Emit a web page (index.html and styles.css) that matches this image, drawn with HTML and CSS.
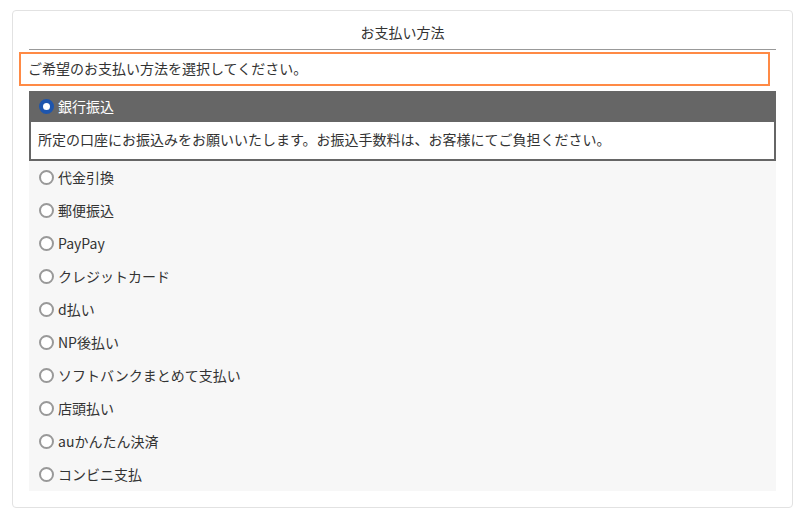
FILE: index.html
```html
<!DOCTYPE html>
<html lang="ja">
<head>
<meta charset="utf-8">
<title>お支払い方法</title>
<link rel="stylesheet" href="styles.css">
</head>
<body>
<section class="card">
  <h2 class="title">お支払い方法</h2>
  <p class="notice">ご希望のお支払い方法を選択してください。</p>
  <ul class="methods">
    <li class="method selected">
      <div class="method-head"><span class="radio"></span>銀行振込</div>
      <div class="method-desc">所定の口座にお振込みをお願いいたします。お振込手数料は、お客様にてご負担ください。</div>
    </li>
    <li class="method"><div class="method-head"><span class="radio"></span>代金引換</div></li>
    <li class="method"><div class="method-head"><span class="radio"></span>郵便振込</div></li>
    <li class="method"><div class="method-head"><span class="radio"></span>PayPay</div></li>
    <li class="method"><div class="method-head"><span class="radio"></span>クレジットカード</div></li>
    <li class="method"><div class="method-head"><span class="radio"></span>d払い</div></li>
    <li class="method"><div class="method-head"><span class="radio"></span>NP後払い</div></li>
    <li class="method"><div class="method-head"><span class="radio"></span>ソフトバンクまとめて支払い</div></li>
    <li class="method"><div class="method-head"><span class="radio"></span>店頭払い</div></li>
    <li class="method"><div class="method-head"><span class="radio"></span>auかんたん決済</div></li>
    <li class="method"><div class="method-head"><span class="radio"></span>コンビニ支払</div></li>
  </ul>
</section>
</body>
</html>
```
FILE: styles.css
```css
* { box-sizing: border-box; }
html, body { margin: 0; padding: 0; background: #fff; }
body {
  font-family: "Noto Sans CJK JP", "Noto Sans", sans-serif;
  font-size: 14px;
  color: #333;
}
.card {
  margin: 10px 8px 0 12px;
  width: 781px;
  height: 498px;
  border: 1px solid #e2e2e2;
  border-radius: 4px;
  padding: 0 16px 16px;
}
.title {
  margin: 0;
  padding: 11px 0 7px;
  font-size: 14px;
  font-weight: normal;
  line-height: 20px;
  text-align: center;
  border-bottom: 1px solid #999;
}
.notice {
  margin: 2px 6px 0 -10px;
  border: 2px solid #ff8a45;
  padding: 4px 7px 6px;
  line-height: 20px;
}
.methods {
  list-style: none;
  margin: 5px 0 0;
  padding: 0;
  background: #f7f7f7;
}
.method-head {
  display: flex;
  align-items: center;
  gap: 4px;
  height: 33px;
  padding: 0 0 2px 10px;
}
.selected .method-head {
  height: 31px;
  background: #666;
  color: #fff;
}
.radio {
  width: 15px;
  height: 15px;
  margin-top: 2px;
  border-radius: 50%;
  border: 2px solid #999;
  background: #fff;
  flex: none;
}
.selected .radio {
  border: 4px solid #1d55ad;
}
.method-desc {
  background: #fff;
  border: 2px solid #666;
  border-top: 0;
  padding: 0 7px 2px;
  height: 39px;
  line-height: 34px;
}
```
